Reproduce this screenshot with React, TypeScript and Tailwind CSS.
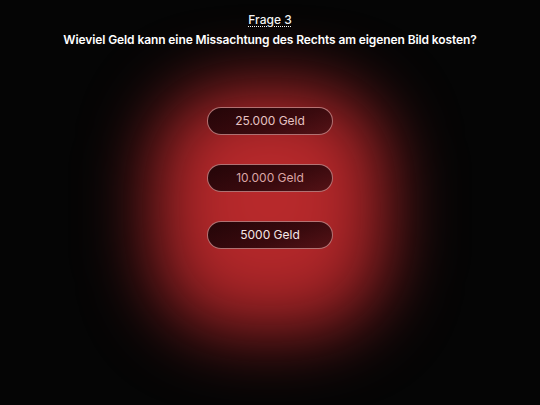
import React from "react";

const answers = [
  { label: "25.000 Geld", text: "text-[#e6c2c2]" },
  { label: "10.000 Geld", text: "text-[#dba5a5]" },
  { label: "5000 Geld", text: "text-[#f4e6e6]" },
];

export default function App() {
  return (
    <div className="relative w-[540px] h-[405px] overflow-hidden bg-[#050505] font-['Inter',sans-serif]">
      <div className="absolute left-[150px] top-[85px] w-[240px] h-[250px] rounded-[85px] bg-[radial-gradient(ellipse_at_50%_45%,#c22d2e_0%,#a82427_55%,#7e181b_100%)] blur-[34px]" />
      <div className="relative flex flex-col items-center pt-[12px]">
        <div className="text-[12px] leading-[16px] font-medium text-[#f2f2f2] underline decoration-dotted decoration-1 underline-offset-2">
          Frage 3
        </div>
        <div className="mt-[3px] text-[12px] leading-[18px] font-semibold text-white tracking-[-0.1px]">
          Wieviel Geld kann eine Missachtung des Rechts am eigenen Bild kosten?
        </div>
        <div className="mt-[58px] flex flex-col gap-[29px]">
          {answers.map((a) => (
            <button
              key={a.label}
              className={`w-[126px] h-[28px] rounded-full border border-[#d08c8c]/80 bg-[linear-gradient(160deg,#240508_0%,#3a0a0e_60%,#551216_100%)] text-[12px] ${a.text}`}
            >
              {a.label}
            </button>
          ))}
        </div>
      </div>
    </div>
  );
}
